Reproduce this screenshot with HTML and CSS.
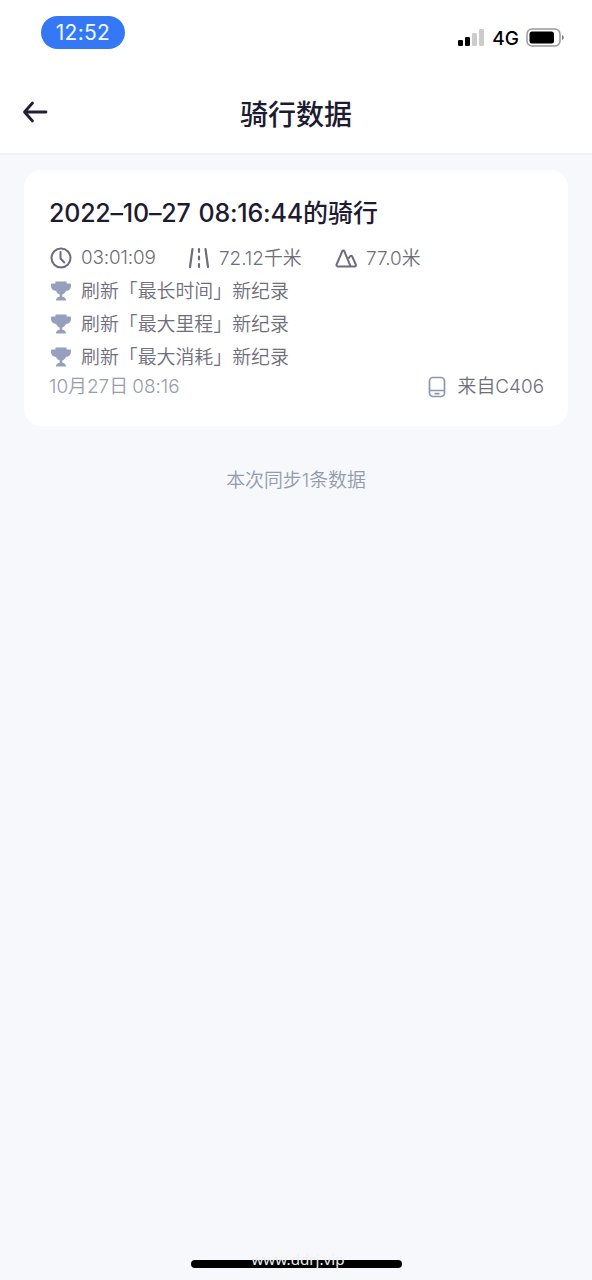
FILE: index.html
```html
<!DOCTYPE html>
<html lang="zh-CN">
<head>
<meta charset="utf-8">
<title>骑行数据</title>
<link rel="stylesheet" href="styles.css">
</head>
<body>
<svg class="defs" aria-hidden="true">
  <symbol id="trophy" viewBox="0 0 22 22">
    <path d="M6 1.500h10q.6 0 .6.600V3.500h3.400q1 0 1 1V6c0 3-2 4.800-5 5-.9 1.900-2.200 3-3.700 3.400v2.300c2.300.2 3.500 1.600 3.900 3.800H5.800c.4-2.200 1.600-3.600 3.900-3.800v-2.300C8.200 14 6.900 12.900 6 11 3 10.800 1 9 1 6V4.500q0-1 1-1h3.400V2.100q0-.6.600-.6z" fill="#969fbd"/>
  </symbol>
</svg>
<header class="header">
  <div class="status">
    <span class="clock">12:52</span>
    <div class="indicators">
      <svg width="27" height="18" viewBox="0 0 27 18">
        <rect x="0" y="11" width="5" height="6" rx="1.300"/>
        <rect x="7" y="8" width="5" height="9" rx="1.300"/>
        <rect x="14" y="4" width="5" height="13" rx="1.300" fill="#ccc"/>
        <rect x="21" y="0" width="5" height="17" rx="1.300" fill="#ccc"/>
      </svg>
      <span class="network">4G</span>
      <svg width="39" height="20" viewBox="0 0 39 20">
        <rect x="1" y="1" width="33" height="17" rx="5" fill="#fff" stroke="#999" stroke-width="1.500"/>
        <rect x="3.500" y="3.500" width="24.500" height="12" rx="2.500"/>
        <path d="M36 7c2.300.8 2.300 4.200 0 5z" fill="#777"/>
      </svg>
    </div>
  </div>
  <nav class="nav">
    <svg class="back" width="28" height="24" viewBox="0 0 28 24"><path d="M24 12H3M10.500 3 2.500 12l8 9" fill="none" stroke="#211f38" stroke-width="2.800" stroke-linecap="round" stroke-linejoin="round"/></svg>
    <h1 class="title">骑行数据</h1>
  </nav>
</header>
<main class="content">
  <section class="card">
    <h2 class="ride-title"><span class="ride-date">2022–10–27 08:16:44</span>的骑行</h2>
    <div class="stats">
      <div class="stat stat-time">
        <svg class="icon" viewBox="0 0 24 24"><circle cx="12" cy="12" r="9.500"/><path d="M11.500 6v6.500l3.800 4"/></svg>
        <span class="num time">03:01:09</span>
      </div>
      <div class="stat stat-distance">
        <svg class="icon" viewBox="0 0 24 24"><path d="M5.500 3 3 21M18.500 3 21 21M12 3v3M12 10.500v3M12 18v3" stroke-width="2.200"/></svg>
        <span><span class="num">72.12</span>千米</span>
      </div>
      <div class="stat">
        <svg class="icon" viewBox="0 0 24 24"><path d="M3.800 20.500h16.700c1.200 0 1.700-1 1.300-2l-3.600-8c-.5-1-1.600-1-2.100-.2l-1 1.500M10.300 5.200c-.5-1-1.500-1-2 0L2.600 18.500c-.4 1 .1 2 1.200 2M10.300 5.200l6.200 15"/></svg>
        <span><span class="num">77.0</span>米</span>
      </div>
    </div>
    <ul class="records">
      <li><svg class="trophy"><use href="#trophy"/></svg><span>刷新「最长时间」新纪录</span></li>
      <li><svg class="trophy"><use href="#trophy"/></svg><span>刷新「最大里程」新纪录</span></li>
      <li><svg class="trophy"><use href="#trophy"/></svg><span>刷新「最大消耗」新纪录</span></li>
    </ul>
    <footer class="meta">
      <span class="date"><span class="num">10</span>月<span class="num">27</span>日 <span class="num">08:16</span></span>
      <span class="source">
        <svg width="18" height="22" viewBox="0 0 18 22" fill="none" stroke="#8e96b2" stroke-width="1.700"><rect x="1.500" y="1.500" width="15" height="19" rx="3.500"/><path d="M2 14.500h14M6.500 17.600h5"/></svg>
        <span>来自<span class="num">C406</span></span>
      </span>
    </footer>
  </section>
  <p class="sync">本次同步<span class="num">1</span>条数据</p>
</main>
<div class="home"><span class="watermark">www.ddrj.vip</span></div>
</body>
</html>
```
FILE: styles.css
```css
* { box-sizing: border-box; }
body {
  margin: 0;
  width: 592px;
  height: 1280px;
  overflow: hidden;
  display: flex;
  flex-direction: column;
  background: #f6f8fc;
  font-family: "Noto Sans CJK SC", sans-serif;
  color: #6f6e7b;
}
h1, h2, p, ul { margin: 0; padding: 0; }
svg { display: block; flex: none; }
.defs { position: absolute; width: 0; height: 0; }
.header {
  height: 155px;
  background: #fff;
  border-bottom: 2px solid #f1f1f5;
}
.status {
  height: 70px;
  padding: 16px 27px 0 41px;
  display: flex;
  justify-content: space-between;
  align-items: flex-start;
}
.clock {
  width: 84px;
  height: 33px;
  border-radius: 17px;
  background: #3478f6;
  color: #effaff;
  font: 400 21px/34px Inter, sans-serif;
  letter-spacing: 0.3px;
  text-align: center;
}
.indicators { display: flex; align-items: center; padding-top: 11px; color: #000; }
.network { font: 500 19px/20px Inter, sans-serif; margin: 2px 7px 0 7px; }
.nav {
  height: 84px;
  padding: 0 22px;
  display: grid;
  grid-template-columns: 28px 1fr 28px;
  align-items: center;
}
.title {
  font-size: 28px;
  line-height: 40px;
  font-weight: 500;
  text-align: center;
  color: #1d1b31;
  padding-top: 1px;
}
.content { flex: 1; padding: 15px 24px 0; }
.card {
  height: 256px;
  border-radius: 17px;
  background: #fff;
  padding: 23px 24px 0 25px;
}
.ride-title {
  font-size: 25px;
  line-height: 36px;
  font-weight: 500;
  color: #1d1b31;
  white-space: nowrap;
}
.ride-date {
  font-family: Inter, sans-serif;
  font-weight: 550;
  letter-spacing: -0.2px;
  word-spacing: 1.5px;
  font-feature-settings: "calt" 0;
}
.num { font-family: Inter, sans-serif; font-feature-settings: "calt" 0; }
.time { letter-spacing: -0.15px; }
.stats, .records, .meta, .sync { font-size: 18.9px; font-weight: 350; white-space: nowrap; }
.stats { display: flex; height: 28px; margin-top: 13px; align-items: center; line-height: 28px; }
.stat { display: flex; align-items: center; gap: 8px; height: 28px; }
.stat span { margin-top: -1px; }
.stat .num { margin-top: 0; }
.stat-time { width: 138px; }
.stat-distance { width: 147px; }
.icon { width: 24px; height: 24px; fill: none; stroke: #6e6b7f; stroke-width: 2; stroke-linecap: round; stroke-linejoin: round; }
.records { list-style: none; margin-top: 3px; }
.records li { display: flex; align-items: center; height: 33px; gap: 9px; padding-left: 1px; line-height: 28px; }
.records span { margin-top: -3px; }
.trophy { width: 22px; height: 22px; margin-top: -1px; }
.meta { display: flex; justify-content: space-between; align-items: center; height: 28px; margin-top: -1px; line-height: 28px; }
.date { color: #989cac; margin-top: -2px; }
.source { display: flex; align-items: center; gap: 12px; }
.source > span { margin-top: -2px; }
.sync { margin-top: 39px; text-align: center; line-height: 28px; color: #929bac; }
.home {
  width: 211px;
  height: 8px;
  margin: 0 auto 12px;
  border-radius: 4px;
  background: #000;
  display: flex;
  align-items: center;
  justify-content: center;
}
.watermark { color: #eeeff1; font: 15.2px/20px "Noto Sans", sans-serif; margin: -11px 0 0 4px; }
```
